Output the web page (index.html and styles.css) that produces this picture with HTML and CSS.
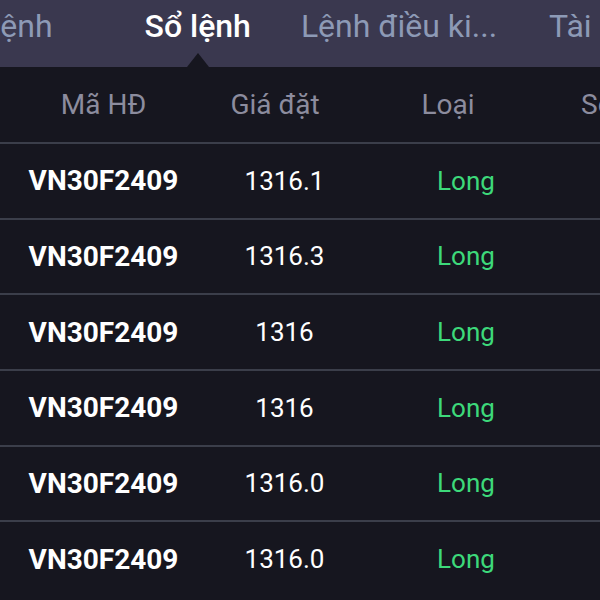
FILE: index.html
```html
<!DOCTYPE html>
<html>
<head>
<meta charset="utf-8">
<title>Sổ lệnh</title>
<link rel="stylesheet" href="styles.css">
</head>
<body>

<div class="app">

	<nav class="tabs">
		<span class="tab tab-first">Lệnh</span>
		<span class="tab tab-active">Sổ lệnh</span>
		<span class="tab tab-third">Lệnh điều ki...</span>
		<span class="tab">Tài</span>
	</nav>

	<div class="orders">

		<div class="row row-head">
			<span class="cell c1">Mã HĐ</span>
			<span class="cell c2">Giá đặt</span>
			<span class="cell c3">Loại</span>
			<span class="cell c4">Số lượng</span>
		</div>

		<div class="row">
			<span class="cell c1 code">VN30F2409</span>
			<span class="cell c2">1316.1</span>
			<span class="cell c3 long">Long</span>
			<span class="cell c4"></span>
		</div>
		<div class="row">
			<span class="cell c1 code">VN30F2409</span>
			<span class="cell c2">1316.3</span>
			<span class="cell c3 long">Long</span>
			<span class="cell c4"></span>
		</div>
		<div class="row">
			<span class="cell c1 code">VN30F2409</span>
			<span class="cell c2">1316</span>
			<span class="cell c3 long">Long</span>
			<span class="cell c4"></span>
		</div>
		<div class="row">
			<span class="cell c1 code">VN30F2409</span>
			<span class="cell c2">1316</span>
			<span class="cell c3 long">Long</span>
			<span class="cell c4"></span>
		</div>
		<div class="row">
			<span class="cell c1 code">VN30F2409</span>
			<span class="cell c2">1316.0</span>
			<span class="cell c3 long">Long</span>
			<span class="cell c4"></span>
		</div>
		<div class="row">
			<span class="cell c1 code">VN30F2409</span>
			<span class="cell c2">1316.0</span>
			<span class="cell c3 long">Long</span>
			<span class="cell c4"></span>
		</div>

	</div>

</div>

</body>
</html>
```

FILE: styles.css
```css
html, body {
	margin: 0;
	padding: 0;
	background-color: #16161f;
}

.app {
	width: 600px;
	height: 600px;
	overflow: hidden;
	font-family: Roboto, "Noto Sans", sans-serif;
}

/* tab strip */

.tabs {
	display: flex;
	align-items: flex-start;
	box-sizing: border-box;
	height: 67px;
	padding-top: 8px;
	background-color: #3a384f;
	white-space: nowrap;
	margin-left: -17px;
}

.tab {
	position: relative;
	font-size: 32px;
	line-height: 36px;
	color: #8d9ab6;
	margin-right: 55px;
}

.tab-first {
	margin-right: 92px;
}

.tab-third {
	margin-right: 52px;
}

.tab-active {
	color: #ffffff;
	font-weight: 500;
	margin-right: 50px;
}

/* caret under the active tab */
.tab-active::after {
	content: "";
	position: absolute;
	left: 50%;
	bottom: -23px;
	margin-left: -11px;
	border-left: 11px solid transparent;
	border-right: 11px solid transparent;
	border-bottom: 14px solid #16161f;
}

/* table */

.row {
	display: grid;
	grid-template-columns: 207px 155px 208px 150px;
	align-items: center;
	box-sizing: border-box;
	height: 75.67px;
	border-top: 2px solid #3b3e4a;
	font-size: 26px;
	color: #ffffff;
	white-space: nowrap;
}

.row-head {
	height: 75px;
	border-top: none;
	font-size: 28px;
	color: #8c8c9e;
}

.cell {
	text-align: center;
}

.row-head .c2 {
	padding-right: 19px;
}

.row-head .c3 {
	padding-right: 36px;
}

.row-head .c4 {
	text-align: left;
	padding-left: 11px;
}

.code {
	font-weight: 700;
	font-size: 28px;
}

.long {
	color: #3dd97a;
}
```
